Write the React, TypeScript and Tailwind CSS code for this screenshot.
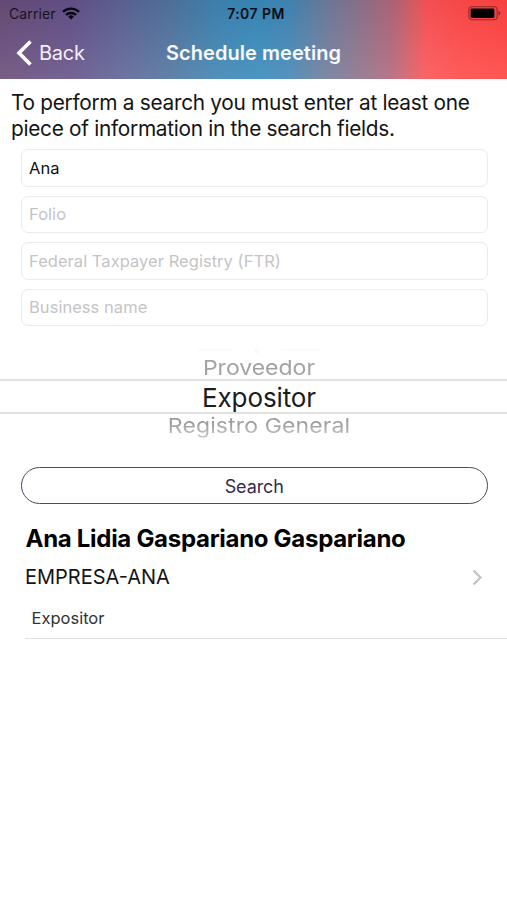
import React from "react";

interface FieldProps {
  placeholder?: string;
  value?: string;
}

const fields: FieldProps[] = [
  { value: "Ana" },
  { placeholder: "Folio" },
  { placeholder: "Federal Taxpayer Registry (FTR)" },
  { placeholder: "Business name" },
];

function WifiIcon() {
  return (
    <svg width="18" height="13" viewBox="0 0 18 13" fill="none" stroke="#080810" strokeWidth="2.4">
      <path d="M1 4.9a11.4 11.4 0 0 1 16 0" />
      <path d="M4 8a7.1 7.1 0 0 1 10 0" />
      <path d="M9 12.4 6.2 9.7a4 4 0 0 1 5.600 0Z" fill="#080810" stroke="none" />
    </svg>
  );
}

function BatteryIcon() {
  return (
    <svg width="33" height="15" viewBox="0 0 33 15">
      <rect x="0.8" y="0.8" width="28.4" height="13" rx="3.2" fill="none" stroke="#5c1c20" strokeOpacity="0.65" strokeWidth="1.1" />
      <rect x="2.6" y="2.6" width="23.8" height="9.4" rx="1.4" fill="#000" />
      <path d="M30.6 5v4.6c1.3-.5 1.6-1.4 1.6-2.3s-.3-1.8-1.6-2.3Z" fill="#5c1c20" fillOpacity="0.75" />
    </svg>
  );
}

// Rounded single line input
function Field({ placeholder, value }: FieldProps) {
  return (
    <input
      type="text"
      defaultValue={value}
      placeholder={placeholder}
      className="h-[37.5px] w-full rounded-[7px] border-[1.5px] border-[#ebebeb] bg-white px-[7.5px] text-[16.5px] tracking-[0.04px] text-[#111] placeholder:text-[#c4c4c6] outline-none"
    />
  );
}

export default function App() {
  return (
    <div className="flex h-[900px] w-[507px] flex-col overflow-hidden bg-white font-['Inter','Liberation_Sans',sans-serif] text-black">
      {/* Status bar and navigation */}
      <header className="h-[79px] shrink-0 bg-[linear-gradient(180deg,rgba(0,0,0,0.04),rgba(255,255,255,0.1)),linear-gradient(91deg,#684c78_0%,#645189_14%,#5d6396_24%,#4f749f_34%,#3d84b2_43%,#3789bb_51%,#4286b5_57%,#6c7c9d_64%,#8d728b_71%,#b0667a_77%,#d95d66_81%,#fc5256_84%,#ff4948_91%,#ff4341_100%)]">
        <div className="grid h-[27px] grid-cols-[150px_1fr_150px] items-center pl-[9px] pr-[6px] text-[14px]">
          <div className="flex items-center gap-[6px] text-[#17131f]">
            <span className="tracking-[0.1px]">Carrier</span>
            <WifiIcon />
          </div>
          <span className="pl-[2px] text-center font-semibold tracking-[0.45px] text-[#0b0d12]">7:07 PM</span>
          <div className="flex justify-end">
            <BatteryIcon />
          </div>
        </div>
        <div className="grid h-[51px] grid-cols-[150px_1fr_150px] items-center text-[20px]">
          <button className="flex items-center gap-[7px] pl-[16px] text-[#f2eef8]">
            <svg width="16" height="26" viewBox="0 0 16 26" fill="none" stroke="#fff" strokeWidth="3.6">
              <path d="M14.5 1.5 3 13l11.5 11.5" />
            </svg>
            <span className="tracking-[-0.25px]">Back</span>
          </button>
          <h1 className="whitespace-nowrap text-center font-semibold tracking-[0.05px] text-[#f7f9fd]">Schedule meeting</h1>
        </div>
      </header>

      <main>
        <p className="whitespace-nowrap pl-[11px] pt-[11px] text-[20.8px] leading-[26px] tracking-[-0.28px] text-[#141414]">
          To perform a search you must enter at least one
          <br />
          piece of information in the search fields.
        </p>

        <div className="flex flex-col gap-[9px] pl-[20.5px] pr-[19px] pt-[7px]">
          {fields.map((field, i) => (
            <Field key={i} {...field} />
          ))}
        </div>

        {/* Wheel picker */}
        <div className="mt-[23px] flex h-[90px] flex-col text-center">
          {/* Row that has almost rolled out of view */}
          <div className="flex h-[5px] justify-center gap-[22px] pl-[12px] opacity-50">
            <span className="h-[2px] w-[34px] bg-[#f6f6f6]" />
            <span className="h-[4px] w-[5px] bg-[#f4f4f4]" />
            <span className="h-[2px] w-[40px] bg-[#f6f6f6]" />
          </div>
          <div className="flex h-[25px] items-center justify-center pl-[11px] pt-[4px] text-[23px] text-[#a3a3a3]">
            <span className="scale-y-[0.9]">Proveedor</span>
          </div>
          <div className="flex h-[35px] items-center justify-center border-y-2 border-[#e2e2e2] pl-[11px] pt-[1px] text-[26px] tracking-[-0.1px] text-[#1c1c1c]">
            <span>Expositor</span>
          </div>
          <div className="flex h-[25px] items-center justify-center pl-[11px] text-[23px] tracking-[0.12px]">
            <span className="scale-y-[0.9] bg-linear-to-b from-[#9c9c9c] from-40% to-[#cfcfcf] to-90% bg-clip-text text-transparent">
              Registro General
            </span>
          </div>
        </div>

        <div className="pl-[20.5px] pr-[19px] pt-[28px]">
          <button className="h-[37px] w-full rounded-full border-[1.5px] border-[#4d4761] pt-[1px] text-[18px] tracking-[-0.1px] text-[#362c50]">
            Search
          </button>
        </div>

        {/* Search result */}
        <div className="ml-[25px] mt-[20px] h-[115px] border-b-[1.5px] border-[#e0e0e0]">
          <h2 className="pl-[0.5px] text-[24px] font-bold leading-[30px] tracking-[-0.29px]">Ana Lidia Gaspariano Gaspariano</h2>
          <div className="mt-[8px] flex items-center justify-between pr-[24px] leading-[30px]">
            <span className="text-[20px] text-[#141414]">EMPRESA-ANA</span>
            <svg width="11" height="17" viewBox="0 0 11 17" fill="none" stroke="#c3c3c6" strokeWidth="2.3">
              <path d="m1.5 1.5 7 7-7 7" />
            </svg>
          </div>
          <p className="mt-[13px] pl-[6.5px] text-[16.5px] leading-[26px] text-[#333]">Expositor</p>
        </div>
      </main>
    </div>
  );
}
